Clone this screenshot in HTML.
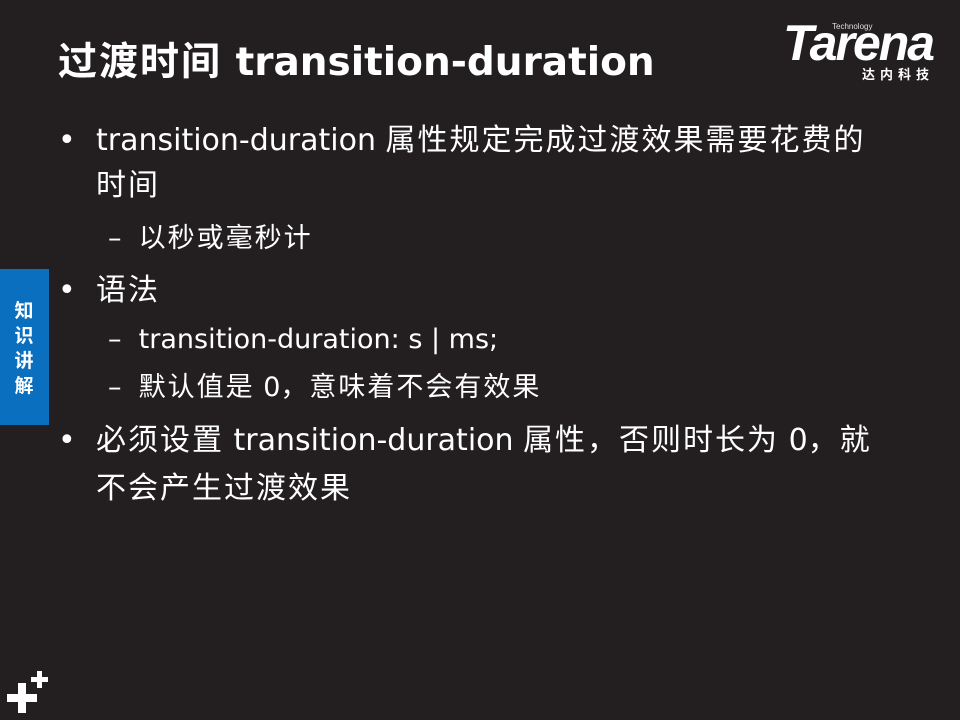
<!DOCTYPE html>
<html><head><meta charset="utf-8"><style>
body{margin:0;width:960px;height:720px;background:#231f20;overflow:hidden;position:relative;font-family:"DejaVu Sans","Noto Sans CJK SC",sans-serif;color:#fff}
.a{position:absolute;white-space:nowrap}
.t{left:58px;top:38px;font-size:39px;font-weight:bold;line-height:50px}
.l{font-size:30px;line-height:40px}
.s{font-size:27px;line-height:36px}
.c{letter-spacing:2px}
.tab{position:absolute;left:0;top:269px;width:49px;height:156px;background:#0b6fbf}
.tab div{position:absolute;left:13px;top:28px;width:22px;font-size:19px;font-weight:bold;line-height:25px;text-align:center;font-family:"Noto Sans CJK SC",sans-serif}
</style></head><body>
<div class="a t"><span class="c">过渡时间</span> transition-duration</div>
<div class="a" style="left:783px;top:16px;font-family:'Liberation Sans',sans-serif;font-size:50px;font-weight:bold;font-style:italic;letter-spacing:-2px;line-height:54px">Tarena</div>
<div class="a" style="left:832px;top:22px;font-size:8px;color:#ddd;font-family:'Liberation Sans',sans-serif">Technology</div>
<div class="a" style="left:862px;top:64px;font-size:13px;font-weight:bold;letter-spacing:5px;font-family:'Noto Sans CJK SC',sans-serif">达内科技</div>
<div class="a l" style="left:58px;top:121px">•</div>
<div class="a l" style="left:96px;top:121px">transition-duration <span class="c">属性规定完成过渡效果需要花费的</span></div>
<div class="a l" style="left:96px;top:166px"><span class="c">时间</span></div>
<div class="a s" style="left:108px;top:221px">–&nbsp; <span class="c">以秒或毫秒计</span></div>
<div class="a l" style="left:58px;top:271px">•</div>
<div class="a l" style="left:96px;top:271px"><span class="c">语法</span></div>
<div class="a s" style="left:108px;top:322px">–&nbsp; transition-duration: s | ms;</div>
<div class="a s" style="left:108px;top:370px">–&nbsp; <span class="c">默认值是</span> 0<span class="c">，意味着不会有效果</span></div>
<div class="a l" style="left:58px;top:421px">•</div>
<div class="a l" style="left:96px;top:421px"><span class="c">必须设置</span> transition-duration <span class="c">属性，否则时长为</span> 0<span class="c">，就</span></div>
<div class="a l" style="left:96px;top:469px"><span class="c">不会产生过渡效果</span></div>
<div class="tab"><div>知识讲解</div></div>
<svg class="a" style="left:0;top:660px" width="60" height="60"><path fill="#fff" d="M18 683h8v11h11v8H26v11h-8v-11H7v-8h11z M37 671h5v6h6v5h-6v6h-5v-6h-6v-5h6z" transform="translate(0,-660)"/></svg>
</body></html>
